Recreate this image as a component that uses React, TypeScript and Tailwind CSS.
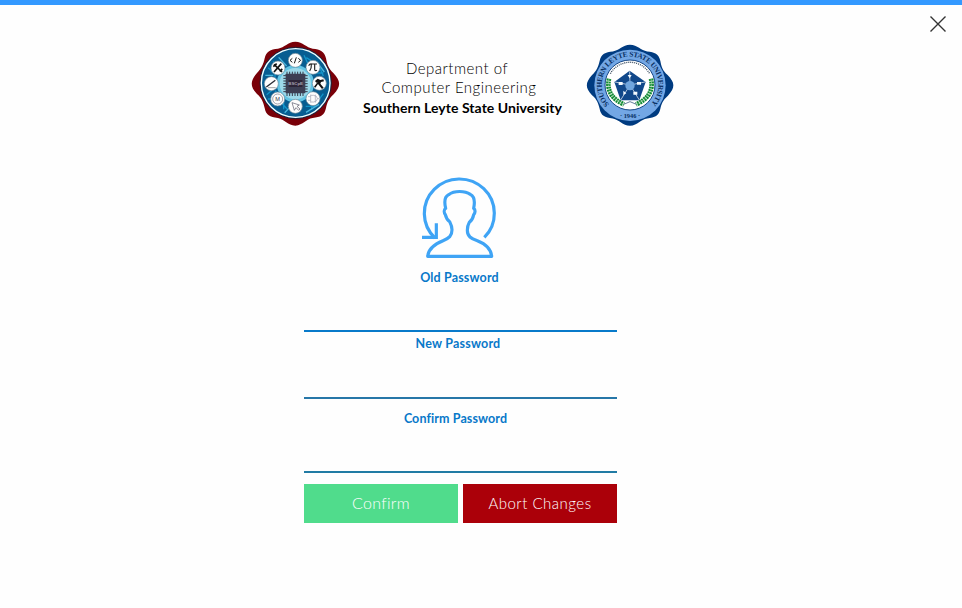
import type { ReactNode } from 'react';

function Seal({ color, children, label, rim }: { color: string; children: ReactNode; label: string; rim?: string }) {
  return (
    <svg className="h-[95px] w-[100px] shrink-0" viewBox="0 0 300 285" role="img" aria-label={label}>
      <path
        transform={rim}
        d="M150 17C173 18 183 34 202 38C225 40 237 46 242 67C245 84 249 97 264 111C287 135 287 151 265 175C249 189 245 202 242 216C237 239 226 243 202 246C182 249 174 267 150 269C127 268 118 250 98 246C73 243 62 238 58 216C54 199 50 187 35 174C14 151 14 135 35 111C49 97 54 85 58 67C63 46 75 40 98 38C118 34 127 18 150 17Z"
        fill={color}
      />
      {children}
    </svg>
  );
}

function Badge({ x, y, children }: { x: number; y: number; children: ReactNode }) {
  return (
    <g transform={`translate(${x} ${y})`}>
      <circle r="21" fill="#fdfdfd" stroke="#6d8796" strokeWidth="2" />
      {children}
    </g>
  );
}

function DepartmentSeal() {
  return (
    <Seal color="#790008" label="Computer Engineering seal" rim="translate(1 0)">
      <circle cx="152" cy="141" r="107" fill="#075d91" stroke="#2b1a2b" strokeWidth="3" />
      <circle cx="152" cy="141" r="103" fill="none" stroke="#f4ffff" strokeWidth="4" />
      <g fill="none" stroke="#149ed4" strokeWidth="4" opacity=".85">
        <path d="M70 95L90 115V155L65 176M84 76L112 106M184 65L222 89L235 120M69 189H100L126 219M182 211H207L235 173M200 221V199L220 178M77 107H104M116 220V192L90 164M177 58L202 111H235" />
        <path d="M61 118H85M101 64L125 90M119 230L143 205M183 229L222 205M214 76L238 108" stroke="#53c6eb" />
      </g>
      <circle cx="151" cy="143" r="56" fill="#62c4e4" />
      <circle cx="151" cy="143" r="47" fill="#9dd9ea" />
      <path d="M126 107V180M134 107V180M142 107V180M150 107V180M158 107V180M166 107V180M174 107V180M115 119H188M115 127H188M115 135H188M115 143H188M115 151H188M115 159H188M115 167H188" stroke="#343847" strokeWidth="3" />
      <rect x="122" y="113" width="59" height="59" rx="2" fill="#3c3e53" />
      <rect x="131" y="132" width="41" height="21" fill="#2d2437" />
      <text x="152" y="148" textAnchor="middle" fill="#a6a0b0" className="font-['Liberation_Sans'] text-[13px] font-bold">BSCpE</text>
      <Badge x={151} y={73}>
        <path d="M-9 -6L-16 0L-9 6M9 -6L16 0L9 6M3 -9L-3 9" fill="none" stroke="#171717" strokeWidth="3" />
      </Badge>
      <Badge x={204} y={94}>
        <path d="M-13 -5Q-10 -11 -4 -10H12M-5 -9Q-4 3 -10 11M5 -9V6Q5 12 12 9" fill="none" stroke="#222" strokeWidth="3.5" />
      </Badge>
      <Badge x={223} y={142}>
        <path d="M-13 -7L-5 -14L3 -10L12 -12L14 -6L5 -4L3 1L13 13L8 17L-4 2L-12 13L-16 10L-5 -4L-9 -2Z" fill="#111" />
      </Badge>
      <Badge x={204} y={188}>
        <path d="M-15 -6H-7M-15 5H-7M-7 -12V12M-7 -10H2Q13 -9 13 0Q13 9 2 10H-7M7 -12V12M13 0H18" fill="none" stroke="#a0a2b1" strokeWidth="2" />
      </Badge>
      <Badge x={151} y={211}>
        <path d="M-10 -11L-3 12L2 4L10 12L14 8L5 0L12 -4Z" fill="none" stroke="#555565" strokeWidth="2" />
      </Badge>
      <Badge x={98} y={189}>
        <circle r="15" fill="none" stroke="#777784" strokeWidth="2" />
        <text y="6" textAnchor="middle" fill="#373744" className="font-['Liberation_Sans'] text-[17px]">M</text>
      </Badge>
      <Badge x={79} y={143}>
        <path d="M-15 10L12 -10" stroke="#272932" strokeWidth="4" />
        <path d="M-10 12H13" stroke="#777" strokeWidth="2" />
      </Badge>
      <Badge x={99} y={96}>
        <path d="M-12 -11L12 12M10 -13L-12 12M-14 -4L-4 -13M5 10L13 3" stroke="#111" strokeWidth="5" />
      </Badge>
    </Seal>
  );
}

function UniversitySeal() {
  return (
    <Seal color="#003b80" label="Southern Leyte State University seal" rim="translate(1.5 10) scale(.99 .965)">
      <circle cx="150" cy="148" r="107" fill="#73a7e5" />
      <circle cx="150" cy="147" r="75" fill="#fff" stroke="#174886" strokeWidth="3" />
      <defs>
        <path id="outer-lettering" d="M88 205A85 85 0 1 1 212 205" />
      </defs>
      <text fill="#072e61" className="font-['Liberation_Serif'] text-[22px] font-bold">
        <textPath href="#outer-lettering" textLength="393" lengthAdjust="spacing">SOUTHERN LEYTE STATE UNIVERSITY</textPath>
      </text>
      <text x="150" y="246" textAnchor="middle" fill="#072e61" className="font-['Liberation_Serif'] text-[19px] font-bold">· 1946 ·</text>
      <path d="M91 113A68 68 0 0 1 209 113" fill="none" stroke="#34475b" strokeWidth="4" strokeDasharray="3 3" />
      <path d="M87 128Q76 181 132 205M213 128Q224 181 168 205" fill="none" stroke="#138b35" strokeWidth="14" strokeDasharray="6 2" />
      <path d="M87 128Q76 181 132 205M213 128Q224 181 168 205" fill="none" stroke="#b7e2b4" strokeWidth="2" strokeDasharray="6 3" />
      <path d="M149 104L197 138L178 193H122L103 138Z" fill="#11488a" />
      <path d="M149 106L150 147L195 138M150 147L178 192M150 147L122 192M150 147L105 138" fill="none" stroke="#fff" strokeWidth="2" />
      <circle cx="150" cy="149" r="14" fill="#70a6de" />
      <path d="M143 117H155L149 127ZM116 138H128V147H116ZM171 138H183V146H171ZM130 164L139 172L130 177ZM160 167H172V176H160Z" fill="#f5fbff" />
      <path d="M131 205L150 197L169 205" fill="none" stroke="#173b66" strokeWidth="2" />
    </Seal>
  );
}

function ProfileIcon() {
  return (
    <svg className="block h-[90px] w-[100px]" viewBox="0 0 300 270" fill="none" stroke="#3fa4f5" strokeWidth="9.5">
      <path d="M75 204A105 103 0 1 1 223 202" />
      <path d="M36 202H79V160" />
      <path d="M126 179C126 171 124 165 119 155C112 150 108 143 106 134C101 127 102 119 107 115C103 98 103 80 116 74C133 61 165 62 181 73C195 80 195 96 191 115C197 120 196 128 191 134C189 145 186 151 178 157C173 166 172 173 172 181C172 199 183 206 202 212C228 222 243 235 245 259H53C55 235 74 222 99 212C117 205 126 198 126 179Z" strokeLinejoin="round" />
    </svg>
  );
}

export default function App() {
  return (
    <main className="h-[608px] w-[962px] overflow-hidden bg-[#fefefe] font-['Lato',sans-serif]">
      <div className="h-[5px] bg-[#3399ff]" />
      <header className="flex h-[126px] items-start pl-[245px]">
        <div className="mt-[31px]"><DepartmentSeal /></div>
        <div className="mt-[54px] flex w-[235px] flex-col items-center text-black">
          <p className="ml-[-11px] h-[19px] text-[15px] leading-[19px] font-light tracking-[0.5px]">Department of</p>
          <p className="ml-[-7px] h-[19px] text-[15px] leading-[19px] font-light tracking-[0.5px]">Computer Engineering</p>
          <p className="mt-[1px] whitespace-nowrap text-[14px] leading-[19px] font-bold tracking-[0.04px]">Southern Leyte State University</p>
        </div>
        <div className="mt-[31px]"><UniversitySeal /></div>
        <button aria-label="Close" className="mt-[10px] ml-[249px] h-[18px] w-[18px]">
          <svg className="h-[18px] w-[18px]" viewBox="0 0 18 18" stroke="#333" strokeWidth="1.4">
            <path d="M1.5 1.5L16.5 16.5M16.5 1.5L1.5 16.5" />
          </svg>
        </button>
      </header>
      <form className="ml-[304px] flex w-[313px] flex-col text-[#0878c9]">
        <div className="mt-[39px] ml-[106px]"><ProfileIcon /></div>
        <label className="mt-[9px] mr-[2px] flex h-[18px] items-center justify-center text-[12.5px] leading-[18px] font-bold tracking-[0.15px]">Old Password</label>
        <input type="password" aria-label="Old Password" className="h-[45px] border-b-2 border-[#087aca] outline-none" />
        <label className="mt-[3px] mr-[5px] flex h-[18px] items-center justify-center text-[12.5px] leading-[18px] font-bold tracking-[0.2px]">New Password</label>
        <input type="password" aria-label="New Password" className="h-[46px] border-b-2 border-[#2777a8] outline-none" />
        <label className="mt-[11px] mr-[10px] flex h-[18px] items-center justify-center text-[12.5px] leading-[18px] font-bold tracking-[0.1px]">Confirm Password</label>
        <input type="password" aria-label="Confirm Password" className="h-[45px] border-b-2 border-[#217ba4] outline-none" />
        <div className="mt-[11px] flex gap-[5px]">
          <button type="button" className="h-[39px] w-[154px] bg-[#50dc8c] pb-[1px] text-[16px] font-light tracking-[0.3px] text-white">Confirm</button>
          <button type="button" className="h-[39px] w-[154px] bg-[#ab0009] text-[15px] font-light tracking-[0.5px] text-white">Abort Changes</button>
        </div>
      </form>
    </main>
  );
}
